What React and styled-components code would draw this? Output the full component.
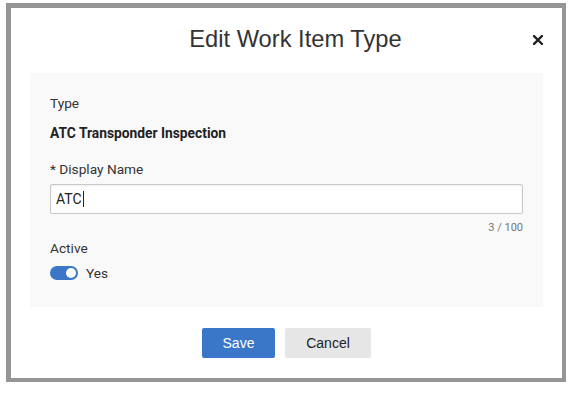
import React from 'react'
import styled, { createGlobalStyle } from 'styled-components'

const GlobalStyle = createGlobalStyle`
  html, body {
    margin: 0;
    padding: 0;
    background: #fff;
  }
  body {
    font-family: Roboto, "Liberation Sans", Arial, sans-serif;
    color: #333;
  }
`

const Backdrop = styled.div`
  margin: 3px 0 0 6px;
  width: 560px;
  height: 379px;
  box-sizing: border-box;
  padding: 5px 4px 4px 5px;
  background: #959595;
`

const Modal = styled.div`
  height: 100%;
  background: #fff;
  display: flex;
  flex-direction: column;
`

const Header = styled.header`
  position: relative;
  height: 65px;
  padding-left: 18px;
  display: flex;
  align-items: center;
  justify-content: center;
`

const Title = styled.h2`
  margin: 0 0 2px;
  font-family: "Liberation Sans", Arial, sans-serif;
  font-weight: 400;
  font-size: 23.7px;
  color: #333;
`

const Close = styled.button`
  position: absolute;
  right: 17px;
  top: 25px;
  width: 14px;
  height: 14px;
  padding: 0;
  border: 0;
  background: none;
  display: flex;
  align-items: center;
  justify-content: center;
  cursor: pointer;
`

const Panel = styled.section`
  margin: 0 19px;
  height: 234px;
  box-sizing: border-box;
  padding: 22px 20px 0;
  background: #f9f9f9;
`

const Label = styled.div`
  font-size: 13.7px;
  line-height: 16px;
  color: #333;
  margin-bottom: ${p => p.$gap || 0}px;
`

const Value = styled.div`
  font-size: 13.8px;
  line-height: 16px;
  font-weight: 700;
  color: #222;
  margin-bottom: 20px;
`

const Input = styled.div`
  height: 30px;
  box-sizing: border-box;
  border: 1px solid #c8c8c8;
  border-radius: 2px;
  background: #fff;
  box-shadow: inset 0 1px 2px rgba(0, 0, 0, 0.08);
  padding: 0 5px;
  display: flex;
  align-items: center;
  font-size: 14px;
  color: #222;
`

const Caret = styled.span`
  display: inline-block;
  width: 1px;
  height: 16px;
  background: #222;
  margin-left: 1px;
`

const Counter = styled.div`
  text-align: right;
  font-size: 11px;
  line-height: 14px;
  color: #777;
  margin: 7px 0 5px;
`

const SwitchRow = styled.div`
  display: flex;
  align-items: center;
  gap: 8px;
  font-size: 13.7px;
  color: #333;
`

const Track = styled.span`
  position: relative;
  width: 28px;
  height: 14px;
  border-radius: 7px;
  background: ${p => (p.$on ? '#3b76c8' : '#bbb')};
`

const Knob = styled.span`
  position: absolute;
  top: 2px;
  left: ${p => (p.$on ? 16 : 2)}px;
  width: 10px;
  height: 10px;
  border-radius: 50%;
  background: #fff;
`

const Footer = styled.footer`
  flex: 1;
  display: flex;
  justify-content: center;
  padding-top: 21px;
  gap: 10px;
`

const Button = styled.button`
  height: 30px;
  width: ${p => p.$w}px;
  border: 0;
  border-radius: 2px;
  font-family: "Liberation Sans", Arial, sans-serif;
  font-size: 14px;
  background: ${p => (p.$primary ? '#3a77c9' : '#e6e6e6')};
  color: ${p => (p.$primary ? '#fff' : '#222')};
  cursor: pointer;
`

export default function App() {
  return (
    <>
      <GlobalStyle />
      <Backdrop>
        <Modal>
          <Header>
            <Title>Edit Work Item Type</Title>
            <Close aria-label="Close">
              <svg width="10" height="10" viewBox="0 0 10 10">
                <path d="M1 1L9 9M9 1L1 9" stroke="#222" strokeWidth="2.4" strokeLinecap="square" />
              </svg>
            </Close>
          </Header>
          <Panel>
            <Label $gap={14}>Type</Label>
            <Value>ATC Transponder Inspection</Value>
            <Label $gap={7}>* Display Name</Label>
            <Input>
              ATC<Caret />
            </Input>
            <Counter>3 / 100</Counter>
            <Label $gap={9}>Active</Label>
            <SwitchRow>
              <Track $on>
                <Knob $on />
              </Track>
              Yes
            </SwitchRow>
          </Panel>
          <Footer>
            <Button $primary $w={73}>Save</Button>
            <Button $w={86}>Cancel</Button>
          </Footer>
        </Modal>
      </Backdrop>
    </>
  )
}
